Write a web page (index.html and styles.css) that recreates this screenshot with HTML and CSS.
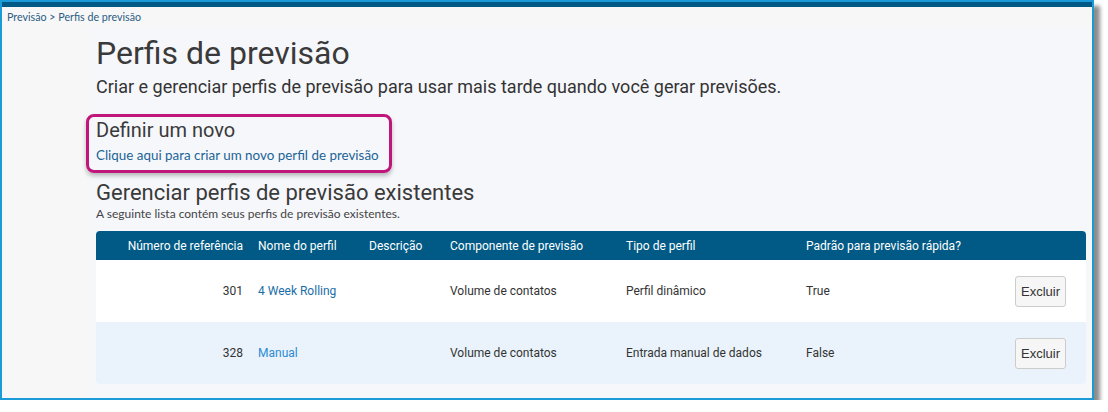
FILE: index.html
```html
<!DOCTYPE html>
<html lang="pt-BR">
<head>
    <meta charset="UTF-8">
    <meta name="viewport" content="width=device-width, initial-scale=1.0">
    <title>Perfis de previsão</title>
    <link rel="stylesheet" href="styles.css">
</head>
<body>
    <div class="frame">
        <div class="topbar"></div>
        <div class="breadcrumb">
            <a href="#">Previsão</a> &gt; <a href="#">Perfis de previsão</a>
        </div>
        <div class="layout">
            <aside class="side"></aside>
            <main class="content">
                <h1>Perfis de previsão</h1>
                <p class="lead">Criar e gerenciar perfis de previsão para usar mais tarde quando você gerar previsões.</p>

                <div class="new-profile">
                    <h3>Definir um novo</h3>
                    <a href="#" class="link">Clique aqui para criar um novo perfil de previsão</a>
                </div>

                <h2>Gerenciar perfis de previsão existentes</h2>
                <p class="note">A seguinte lista contém seus perfis de previsão existentes.</p>

                <table class="profiles">
                    <colgroup>
                        <col style="width: 154px">
                        <col style="width: 111px">
                        <col style="width: 81px">
                        <col style="width: 176px">
                        <col style="width: 180px">
                        <col style="width: 209px">
                        <col>
                    </colgroup>
                    <thead>
                        <tr>
                            <th class="num">Número de referência</th>
                            <th>Nome do perfil</th>
                            <th>Descrição</th>
                            <th>Componente de previsão</th>
                            <th>Tipo de perfil</th>
                            <th>Padrão para previsão rápida?</th>
                            <th></th>
                        </tr>
                    </thead>
                    <tbody>
                        <tr>
                            <td class="num">301</td>
                            <td><a href="#" class="name">4 Week Rolling</a></td>
                            <td></td>
                            <td>Volume de contatos</td>
                            <td>Perfil dinâmico</td>
                            <td>True</td>
                            <td class="actions"><button class="delete-button">Excluir</button></td>
                        </tr>
                        <tr>
                            <td class="num">328</td>
                            <td><a href="#" class="name fresh">Manual</a></td>
                            <td></td>
                            <td>Volume de contatos</td>
                            <td>Entrada manual de dados</td>
                            <td>False</td>
                            <td class="actions"><button class="delete-button">Excluir</button></td>
                        </tr>
                    </tbody>
                </table>
            </main>
        </div>
    </div>
</body>
</html>
```

FILE: styles.css
```css
body {
    margin: 0;
    padding: 0;
    background-color: #fff;
    font-family: Roboto, "Liberation Sans", sans-serif;
    color: #333;
}
.frame {
    width: 1090px;
    height: 396px;
    border: 2px solid #1a9bd7;
    background-color: #f7f7f7;
    box-shadow: 6px 6px 4px rgba(0, 0, 0, 0.45);
    display: flex;
    flex-direction: column;
    overflow: hidden;
}
.topbar {
    height: 5px;
    background-color: #005a85;
}
.breadcrumb {
    height: 20px;
    padding-left: 5px;
    font-family: Lato, "Open Sans", sans-serif;
    font-size: 10.7px;
    line-height: 20px;
    color: #2a5d84;
}
.breadcrumb a {
    color: #2a5d84;
    text-decoration: none;
}
.layout {
    flex: 1;
    display: flex;
}
.side {
    width: 88px;
    background-color: #f7f7f7;
}
.content {
    flex: 1;
    background-color: #f6f7fb;
    padding: 8px 6px 0 6px;
}
h1 {
    margin: 0 0 5px 0;
    font-size: 32px;
    font-weight: 400;
    line-height: 36px;
    color: #3a3a3a;
}
.lead {
    margin: 0;
    font-size: 18px;
    line-height: 22px;
    color: #333;
}
.new-profile {
    display: inline-block;
    margin: 16px 0 0 -10px;
    padding: 1px 10px 5px 7px;
    border: 3px solid #c0157a;
    border-radius: 8px;
    box-shadow: 0 3px 4px rgba(0, 0, 0, 0.25);
}
.new-profile h3 {
    margin: 0;
    font-size: 20px;
    font-weight: 400;
    line-height: 24px;
    color: #3a3a3a;
}
.link {
    display: block;
    margin-top: 3px;
    font-family: Lato, "Open Sans", sans-serif;
    font-size: 13.4px;
    line-height: 20px;
    color: #1a6496;
    text-decoration: none;
}
h2 {
    margin: 7px 0 0 0;
    font-size: 22px;
    font-weight: 400;
    line-height: 26px;
    color: #3a3a3a;
}
.note {
    margin: 0;
    font-family: Lato, "Open Sans", sans-serif;
    font-size: 12px;
    line-height: 16px;
    color: #444;
}
.profiles {
    width: 990px;
    margin-top: 9px;
    border-collapse: separate;
    border-spacing: 0;
    table-layout: fixed;
    font-size: 12px;
}
.profiles th {
    height: 29px;
    padding: 0 8px;
    background-color: #005a85;
    color: #fff;
    font-weight: 400;
    text-align: left;
    white-space: nowrap;
}
.profiles th:first-child {
    border-top-left-radius: 4px;
}
.profiles th:last-child {
    border-top-right-radius: 4px;
}
.profiles td {
    height: 62px;
    padding: 0 8px;
    background-color: #fff;
    color: #333;
    white-space: nowrap;
}
.profiles tbody tr:nth-child(2) td {
    background-color: #eaf3fb;
}
.profiles tbody tr:last-child td:first-child {
    border-bottom-left-radius: 4px;
}
.profiles tbody tr:last-child td:last-child {
    border-bottom-right-radius: 4px;
}
.profiles .num {
    text-align: right;
    padding-right: 7px;
}
.name {
    color: #1b6ea8;
    text-decoration: none;
}
.name.fresh {
    color: #2a8bd6;
}
.profiles .actions {
    text-align: right;
    padding-right: 20px;
}
.delete-button {
    width: 51px;
    height: 31px;
    padding: 0;
    background-color: #f6f6f6;
    border: 1px solid #ccc;
    border-radius: 3px;
    font-family: "Liberation Sans", Arial, sans-serif;
    font-size: 13px;
    color: #333;
    cursor: pointer;
}
```
